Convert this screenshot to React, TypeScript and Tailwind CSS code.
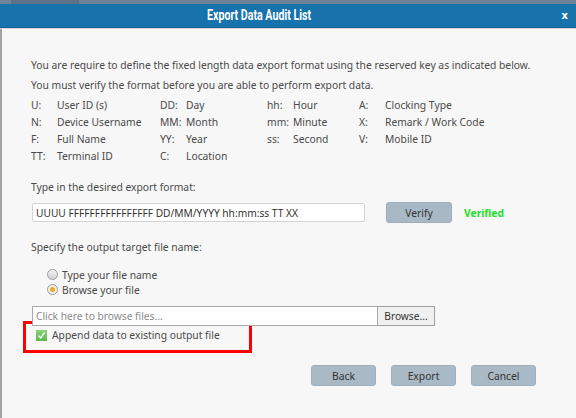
import React from "react";

const keys: [string, string][][] = [
  [["U:", "User ID (s)"], ["DD:", "Day"], ["hh:", "Hour"], ["A:", "Clocking Type"]],
  [["N:", "Device Username"], ["MM:", "Month"], ["mm:", "Minute"], ["X:", "Remark / Work Code"]],
  [["F:", "Full Name"], ["YY:", "Year"], ["ss:", "Second"], ["V:", "Mobile ID"]],
  [["TT:", "Terminal ID"], ["C:", "Location"], ["", ""], ["", ""]],
];

const colX = ["w-[129px]", "w-[107px]", "w-[92px]", "w-[160px]"];

export default function App() {
  return (
    <div
      className="w-[576px] h-[418px] overflow-hidden flex flex-col bg-[#f7f7f7] text-[#4a4a4a]"
      style={{ fontFamily: '"Noto Sans", "Open Sans", sans-serif' }}
    >
      <div className="h-[4px] flex shrink-0">
        <div className="w-[11px] bg-[#6c8597]" />
        <div className="w-[68px] bg-[#5a7388]" />
        <div className="flex-1 bg-[#6b8496]" />
      </div>
      <div className="h-[24px] shrink-0 bg-[#1872ab] border-b border-[#0f5f92] flex items-center pl-[207px] relative">
        <span
          className="inline-block text-white text-[14px] font-bold origin-left scale-x-[0.76] whitespace-nowrap"
          style={{ fontFamily: 'Roboto, "Liberation Sans", sans-serif' }}
        >
          Export Data Audit List
        </span>
        <span className="absolute right-[8px] top-[4px] text-white text-[10px] font-bold" style={{ fontFamily: '"DejaVu Sans", sans-serif' }}>
          x
        </span>
      </div>
      <div className="h-[1px] bg-[#d4d6d8] shrink-0" />
      <div className="flex-1 border-l-2 border-[#a3a3a3] pl-[29px] pt-[26px] text-[10.3px] leading-[20px]">
        <div>You are require to define the fixed length data export format using the reserved key as indicated below.</div>
        <div>You must verify the format before you are able to perform export data.</div>
        <div className="mt-[1px] flex flex-col">
          {keys.map((row, i) => (
            <div key={i} className="flex h-[17px] items-center">
              {row.map(([k, v], j) => (
                <div key={j} className={`flex ${colX[j]}`}>
                  <span className="w-[26px] shrink-0">{k}</span>
                  <span>{v}</span>
                </div>
              ))}
            </div>
          ))}
        </div>
        <div className="mt-[13px]">Type in the desired export format:</div>
        <div className="mt-[5px] flex items-center">
          <div className="w-[333px] h-[19px] ml-[1px] bg-white border border-[#d4d4d4] rounded-[2px] flex items-center pl-[3px] text-[#333] text-[10.2px]">
            UUUU FFFFFFFFFFFFFFFF DD/MM/YYYY hh:mm:ss TT XX
          </div>
          <div className="ml-[21px] w-[66px] h-[21px] rounded-[3px] bg-[#a8b8c4] border border-[#9eafbb] flex items-center justify-center text-[#333]">
            Verify
          </div>
          <div className="ml-[12px] text-[#22e028] font-bold">Verified</div>
        </div>
        <div className="mt-[14px]">Specify the output target file name:</div>
        <div className="mt-[10px] pl-[16px] flex flex-col">
          <div className="flex items-center h-[15px] gap-[4px]">
            <span className="w-[11px] h-[11px] rounded-full border border-[#9a9a9a] bg-gradient-to-b from-[#f4f4f4] to-[#d0d0d0]" />
            <span>Type your file name</span>
          </div>
          <div className="flex items-center h-[15px] gap-[4px]">
            <span className="w-[11px] h-[11px] rounded-full border border-[#9a9a9a] bg-[#f0f0f0] flex items-center justify-center">
              <span className="w-[5px] h-[5px] rounded-full bg-[#f2a81b]" />
            </span>
            <span>Browse your file</span>
          </div>
        </div>
        <div className="mt-[9px] flex ml-[1px]">
          <div className="w-[346px] h-[20px] bg-white border border-[#a9a9a9] flex items-center pl-[3px] text-[#8a8a8a] text-[10.2px]">
            Click here to browse files...
          </div>
          <div className="w-[57px] h-[20px] bg-[#f0f0f0] border border-[#a0a0a0] border-l-0 flex items-center justify-center text-[#333] text-[10.2px]">
            Browse...
          </div>
        </div>
        <div className="-ml-[8px] -mt-[5px] w-[229px] h-[32px] border-[3px] border-[#ff0000] flex items-start pt-[4px] pl-[10px] gap-[5px]">
          <span className="w-[11px] h-[11px] mt-[2px] bg-gradient-to-b from-[#8ad37a] to-[#5db84a] flex items-center justify-center">
            <svg width="9" height="9" viewBox="0 0 9 9">
              <path d="M1.5 4.8 L3.6 7 L7.6 1.5" fill="none" stroke="#fff" strokeWidth="1.4" />
            </svg>
          </span>
          <span className="leading-[14px]">Append data to existing output file</span>
        </div>
        <div className="mt-[12px] flex pl-[280px] gap-[15px]">
          {["Back", "Export", "Cancel"].map((b) => (
            <div key={b} className="w-[65px] h-[21px] rounded-[3px] bg-[#a9bac6] border border-[#9fb0bc] flex items-center justify-center text-[#333]">
              {b}
            </div>
          ))}
        </div>
      </div>
    </div>
  );
}
